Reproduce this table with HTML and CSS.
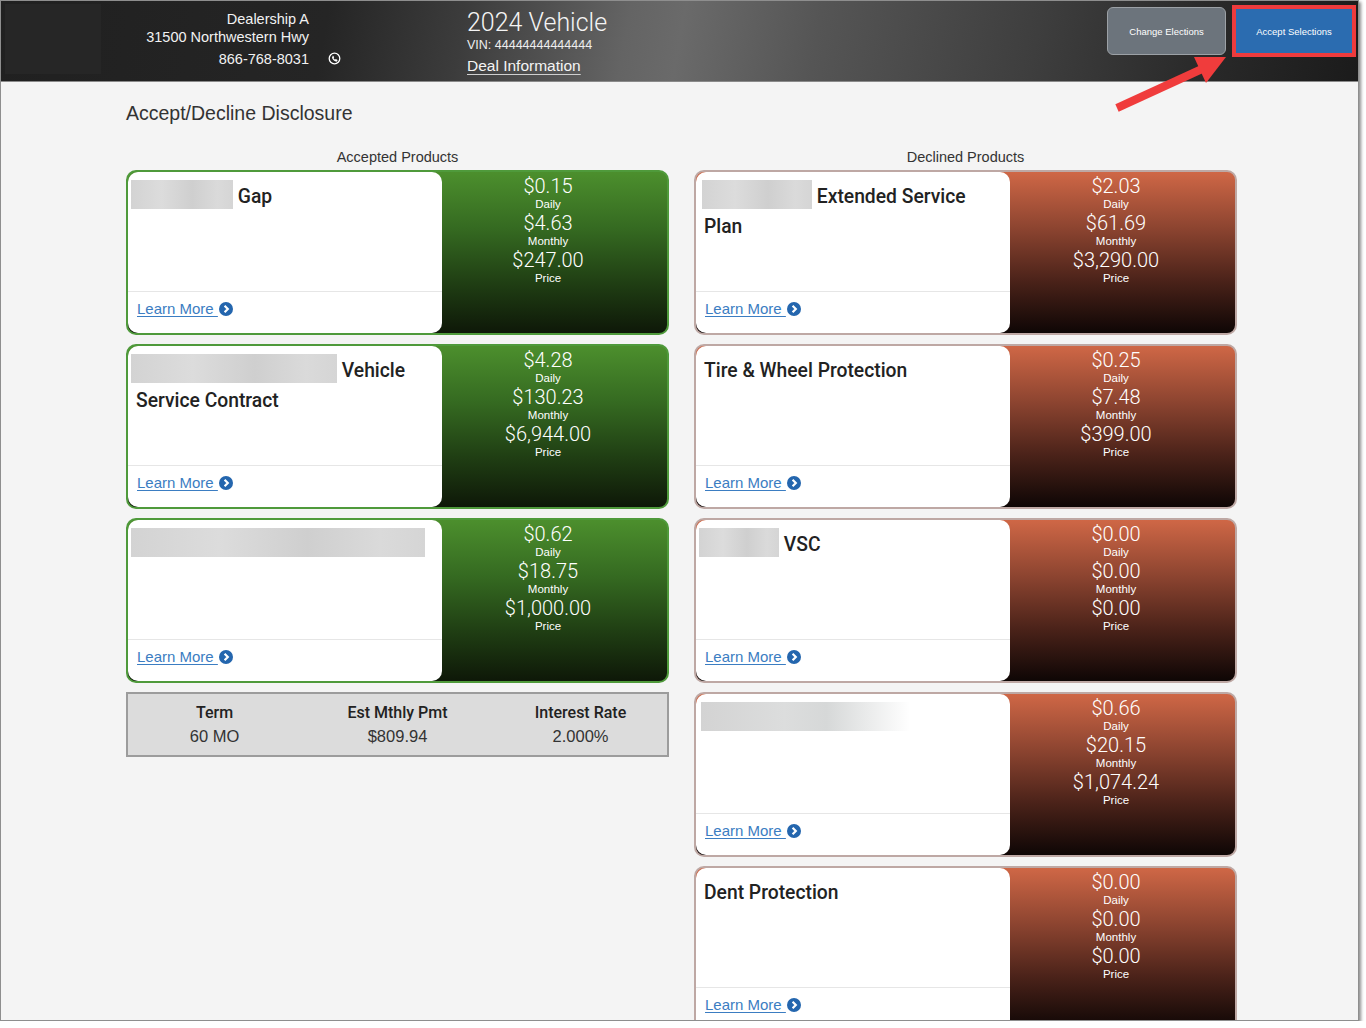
FILE: index.html
```html
<!DOCTYPE html>
<html lang="en">
<head>
<meta charset="utf-8">
<title>Accept/Decline Disclosure</title>
<link rel="stylesheet" href="styles.css">
</head>
<body>
<div class="frame">
  <header class="header">
    <div class="logo"></div>
    <div class="dealer">
      <div>Dealership A</div>
      <div>31500 Northwestern Hwy</div>
      <div class="dealer-phone">866-768-8031</div>
    </div>
    <svg class="phone" viewBox="0 0 13 13" width="13" height="13">
      <circle cx="6.5" cy="6.5" r="5.3" fill="none" stroke="#fff" stroke-width="1.3"/>
      <path d="M4.5 3.8c.3-.2.7-.1.9.2l.6 1c.2.3.1.6-.1.8l-.4.3c.3.7.9 1.3 1.6 1.6l.3-.4c.2-.2.5-.3.8-.1l1 .6c.3.2.4.6.2.9l-.3.5c-.3.4-.8.6-1.3.4C6.2 9.1 4.8 7.7 4.1 6c-.2-.5 0-1 .4-1.3z" fill="#fff"/>
    </svg>
    <div class="vehicle">
      <div class="veh-title">2024 Vehicle</div>
      <div class="vin">VIN: 44444444444444</div>
      <a class="deal" href="#">Deal Information</a>
    </div>
    <div class="actions">
      <button class="btn-change" type="button">Change Elections</button>
      <div class="accept-wrap"><button class="btn-accept" type="button">Accept Selections</button></div>
    </div>
  </header>

  <svg class="arrow" viewBox="0 0 1357 120" width="1357" height="120">
    <line x1="1116" y1="107" x2="1201" y2="68" stroke="#f03c3c" stroke-width="8"/>
    <polygon points="1193,56 1205,82 1225,56" fill="#f03c3c"/>
  </svg>

  <main class="main">
    <h1 class="page-title">Accept/Decline Disclosure</h1>
    <div class="columns">
      <section class="col">
        <div class="col-head">Accepted Products</div>

        <div class="card accepted">
          <div class="info">
            <div class="title"><span class="ph ph-gap"></span> Gap</div>
            <div class="foot"><a class="learn" href="#"><span>Learn More </span><svg class="chev" viewBox="0 0 14 14" width="14" height="14"><circle cx="7" cy="7" r="7" fill="#2466ae"/><path d="M5.6 3.8L8.8 7L5.6 10.2" fill="none" stroke="#fff" stroke-width="2.2"/></svg></a></div>
          </div>
          <div class="prices">
            <div class="amt">$0.15</div><div class="lbl">Daily</div>
            <div class="amt">$4.63</div><div class="lbl">Monthly</div>
            <div class="amt">$247.00</div><div class="lbl">Price</div>
          </div>
        </div>

        <div class="card accepted">
          <div class="info">
            <div class="title"><span class="ph ph-vsc-long"></span> Vehicle Service Contract</div>
            <div class="foot"><a class="learn" href="#"><span>Learn More </span><svg class="chev" viewBox="0 0 14 14" width="14" height="14"><circle cx="7" cy="7" r="7" fill="#2466ae"/><path d="M5.6 3.8L8.8 7L5.6 10.2" fill="none" stroke="#fff" stroke-width="2.2"/></svg></a></div>
          </div>
          <div class="prices">
            <div class="amt">$4.28</div><div class="lbl">Daily</div>
            <div class="amt">$130.23</div><div class="lbl">Monthly</div>
            <div class="amt">$6,944.00</div><div class="lbl">Price</div>
          </div>
        </div>

        <div class="card accepted">
          <div class="info">
            <div class="title"><span class="ph ph-full"></span></div>
            <div class="foot"><a class="learn" href="#"><span>Learn More </span><svg class="chev" viewBox="0 0 14 14" width="14" height="14"><circle cx="7" cy="7" r="7" fill="#2466ae"/><path d="M5.6 3.8L8.8 7L5.6 10.2" fill="none" stroke="#fff" stroke-width="2.2"/></svg></a></div>
          </div>
          <div class="prices">
            <div class="amt">$0.62</div><div class="lbl">Daily</div>
            <div class="amt">$18.75</div><div class="lbl">Monthly</div>
            <div class="amt">$1,000.00</div><div class="lbl">Price</div>
          </div>
        </div>

        <div class="summary">
          <div class="sum-col"><div class="sum-h">Term</div><div class="sum-v">60 MO</div></div>
          <div class="sum-col"><div class="sum-h">Est Mthly Pmt</div><div class="sum-v">$809.94</div></div>
          <div class="sum-col"><div class="sum-h">Interest Rate</div><div class="sum-v">2.000%</div></div>
        </div>
      </section>

      <section class="col">
        <div class="col-head">Declined Products</div>

        <div class="card declined">
          <div class="info">
            <div class="title"><span class="ph ph-ext"></span> Extended Service Plan</div>
            <div class="foot"><a class="learn" href="#"><span>Learn More </span><svg class="chev" viewBox="0 0 14 14" width="14" height="14"><circle cx="7" cy="7" r="7" fill="#2466ae"/><path d="M5.6 3.8L8.8 7L5.6 10.2" fill="none" stroke="#fff" stroke-width="2.2"/></svg></a></div>
          </div>
          <div class="prices">
            <div class="amt">$2.03</div><div class="lbl">Daily</div>
            <div class="amt">$61.69</div><div class="lbl">Monthly</div>
            <div class="amt">$3,290.00</div><div class="lbl">Price</div>
          </div>
        </div>

        <div class="card declined">
          <div class="info">
            <div class="title">Tire &amp; Wheel Protection</div>
            <div class="foot"><a class="learn" href="#"><span>Learn More </span><svg class="chev" viewBox="0 0 14 14" width="14" height="14"><circle cx="7" cy="7" r="7" fill="#2466ae"/><path d="M5.6 3.8L8.8 7L5.6 10.2" fill="none" stroke="#fff" stroke-width="2.2"/></svg></a></div>
          </div>
          <div class="prices">
            <div class="amt">$0.25</div><div class="lbl">Daily</div>
            <div class="amt">$7.48</div><div class="lbl">Monthly</div>
            <div class="amt">$399.00</div><div class="lbl">Price</div>
          </div>
        </div>

        <div class="card declined">
          <div class="info">
            <div class="title"><span class="ph ph-vsc"></span> VSC</div>
            <div class="foot"><a class="learn" href="#"><span>Learn More </span><svg class="chev" viewBox="0 0 14 14" width="14" height="14"><circle cx="7" cy="7" r="7" fill="#2466ae"/><path d="M5.6 3.8L8.8 7L5.6 10.2" fill="none" stroke="#fff" stroke-width="2.2"/></svg></a></div>
          </div>
          <div class="prices">
            <div class="amt">$0.00</div><div class="lbl">Daily</div>
            <div class="amt">$0.00</div><div class="lbl">Monthly</div>
            <div class="amt">$0.00</div><div class="lbl">Price</div>
          </div>
        </div>

        <div class="card declined">
          <div class="info">
            <div class="title"><span class="ph ph-blank"></span></div>
            <div class="foot"><a class="learn" href="#"><span>Learn More </span><svg class="chev" viewBox="0 0 14 14" width="14" height="14"><circle cx="7" cy="7" r="7" fill="#2466ae"/><path d="M5.6 3.8L8.8 7L5.6 10.2" fill="none" stroke="#fff" stroke-width="2.2"/></svg></a></div>
          </div>
          <div class="prices">
            <div class="amt">$0.66</div><div class="lbl">Daily</div>
            <div class="amt">$20.15</div><div class="lbl">Monthly</div>
            <div class="amt">$1,074.24</div><div class="lbl">Price</div>
          </div>
        </div>

        <div class="card declined">
          <div class="info">
            <div class="title">Dent Protection</div>
            <div class="foot"><a class="learn" href="#"><span>Learn More </span><svg class="chev" viewBox="0 0 14 14" width="14" height="14"><circle cx="7" cy="7" r="7" fill="#2466ae"/><path d="M5.6 3.8L8.8 7L5.6 10.2" fill="none" stroke="#fff" stroke-width="2.2"/></svg></a></div>
          </div>
          <div class="prices">
            <div class="amt">$0.00</div><div class="lbl">Daily</div>
            <div class="amt">$0.00</div><div class="lbl">Monthly</div>
            <div class="amt">$0.00</div><div class="lbl">Price</div>
          </div>
        </div>
      </section>
    </div>
  </main>
</div>
</body>
</html>
```

FILE: styles.css
```css
* { box-sizing: border-box; }

body {
  margin: 0;
  background: #ffffff;
  font-family: "Liberation Sans", Arial, sans-serif;
  color: #333;
}

.frame {
  position: relative;
  width: 1359px;
  height: 1021px;
  border: 1px solid #8e8e8e;
  background: #f4f4f4;
  overflow: hidden;
  box-shadow: 2px 2px 3px rgba(0, 0, 0, 0.45);
}

/* ---------- header ---------- */
.header {
  height: 81px;
  border-bottom: 1px solid #8a8a8a;
  display: flex;
  align-items: flex-start;
  color: #fff;
  background: linear-gradient(100deg, #202020 0%, #252525 24%, #3c3c3c 34%, #646464 46%, #6a6a6a 50%, #555 60%, #3e3e3e 76%, #2a2a2a 88%, #1b1b1b 100%);
}

.logo {
  width: 96px;
  height: 70px;
  margin: 3px 0 0 4px;
  background: #262626;
}

.dealer {
  width: 208px;
  text-align: right;
  font-size: 14.5px;
  line-height: 18px;
  padding-top: 9px;
  color: #f2f2f2;
}

.dealer-phone { margin-top: 4px; }

.phone {
  display: block;
  margin: 51px 0 0 19px;
  flex: none;
}

.vehicle {
  margin-left: 126px;
  padding-top: 7px;
}

.veh-title {
  font-family: Roboto, "Liberation Sans", sans-serif;
  font-weight: 300;
  font-size: 25px;
  line-height: 29px;
  color: #f4f4f4;
}

.vin {
  font-size: 12.5px;
  line-height: 16px;
  color: #eee;
}

.deal {
  display: inline-block;
  margin-top: 3px;
  font-size: 15.5px;
  line-height: 20px;
  color: #f4f4f4;
  text-decoration: underline;
  text-underline-offset: 3px;
  text-decoration-color: #cfcfcf;
}

.actions {
  margin-left: auto;
  margin-right: 2px;
  display: flex;
  align-items: flex-start;
  gap: 6px;
}

.btn-change {
  margin-top: 6px;
  width: 119px;
  height: 48px;
  border: 1px solid #9ca1a6;
  border-radius: 6px;
  background: #6c747c;
  color: #fff;
  font-family: "Liberation Sans", Arial, sans-serif;
  font-size: 9.5px;
  padding: 0;
}

.accept-wrap {
  margin-top: 4px;
  border: 4px solid #ee3b3d;
}

.btn-accept {
  display: block;
  width: 116px;
  height: 44px;
  border: 0;
  background: #2b6cb0;
  color: #fff;
  font-family: "Liberation Sans", Arial, sans-serif;
  font-size: 9.5px;
  padding: 0;
}

.arrow {
  position: absolute;
  left: 0;
  top: 0;
  pointer-events: none;
}

/* ---------- main ---------- */
.main {
  margin-left: 125px;
  width: 1111px;
}

.page-title {
  margin: 19px 0 0;
  font-size: 19.5px;
  line-height: 24px;
  font-weight: normal;
  color: #333;
}

.columns {
  display: flex;
  gap: 25px;
  margin-top: 23px;
}

.col { width: 543px; }

.col-head {
  text-align: center;
  font-size: 14.5px;
  line-height: 18px;
  color: #333;
  margin-bottom: 4px;
}

.card {
  height: 165px;
  border: 2px solid;
  border-radius: 10px;
  display: flex;
  overflow: hidden;
  margin-bottom: 9px;
}

.card.accepted {
  border-color: #4f9a3b;
  background: linear-gradient(180deg, #4c8f2d 0%, #356a21 35%, #1f3d13 70%, #0e1808 100%);
}

.card.declined {
  border-color: #bea8a4;
  background: linear-gradient(180deg, #cf6746 0%, #8c4430 35%, #4a2219 68%, #0e0605 100%);
}

.info {
  width: 314px;
  flex: none;
  background: #fff;
  border-radius: 10px;
  display: flex;
  flex-direction: column;
}

.title {
  flex: 1;
  padding: 10px 8px 0;
  font-family: Roboto, "Liberation Sans", sans-serif;
  font-weight: 500;
  font-size: 19.3px;
  line-height: 30px;
  color: #222;
}

.ph {
  display: inline-block;
  height: 29px;
  vertical-align: top;
  margin-left: -5px;
  margin-top: -2px;
  background: linear-gradient(90deg, #d3d3d3 0%, #dcdcdc 30%, #cfcfcf 60%, #dadada 85%, #d5d5d5 100%);
}

.ph-gap { width: 102px; }
.ph-vsc-long { width: 206px; }
.ph-full { width: 294px; }
.ph-ext { width: 110px; margin-left: -2px; }
.ph-vsc { width: 80px; }
.ph-blank {
  width: 209px;
  margin-left: -3px;
  background: linear-gradient(90deg, #d3d3d3 0%, #dcdddd 40%, #d6d8d8 60%, #ffffff 100%);
}

.foot {
  height: 42px;
  flex: none;
  border-top: 1px solid #e6e6e6;
  padding: 8px 9px;
  line-height: 18px;
}

.learn {
  font-size: 15px;
  color: #3b7dc2;
  text-decoration: underline;
  text-underline-offset: 2px;
}

.chev {
  display: inline-block;
  vertical-align: -2px;
  margin-left: 1px;
}

.prices {
  flex: 1;
  display: flex;
  flex-direction: column;
  align-items: center;
  padding: 2px 13px 0 0;
  color: #fff;
}

.amt {
  font-family: Roboto, "Liberation Sans", sans-serif;
  font-weight: 300;
  font-size: 20px;
  line-height: 24px;
}

.lbl {
  font-size: 11.5px;
  line-height: 13px;
}

/* ---------- summary ---------- */
.summary {
  border: 2px solid #9c9c9c;
  background: #dcdcdc;
  display: grid;
  grid-template-columns: repeat(3, 183px);
  justify-content: center;
  padding: 9px 0;
  text-align: center;
}

.sum-h {
  font-family: Roboto, "Liberation Sans", sans-serif;
  font-weight: 500;
  font-size: 16px;
  line-height: 20px;
  color: #222;
}

.sum-v {
  margin-top: 3px;
  font-size: 16.5px;
  line-height: 20px;
  color: #333;
}
```
